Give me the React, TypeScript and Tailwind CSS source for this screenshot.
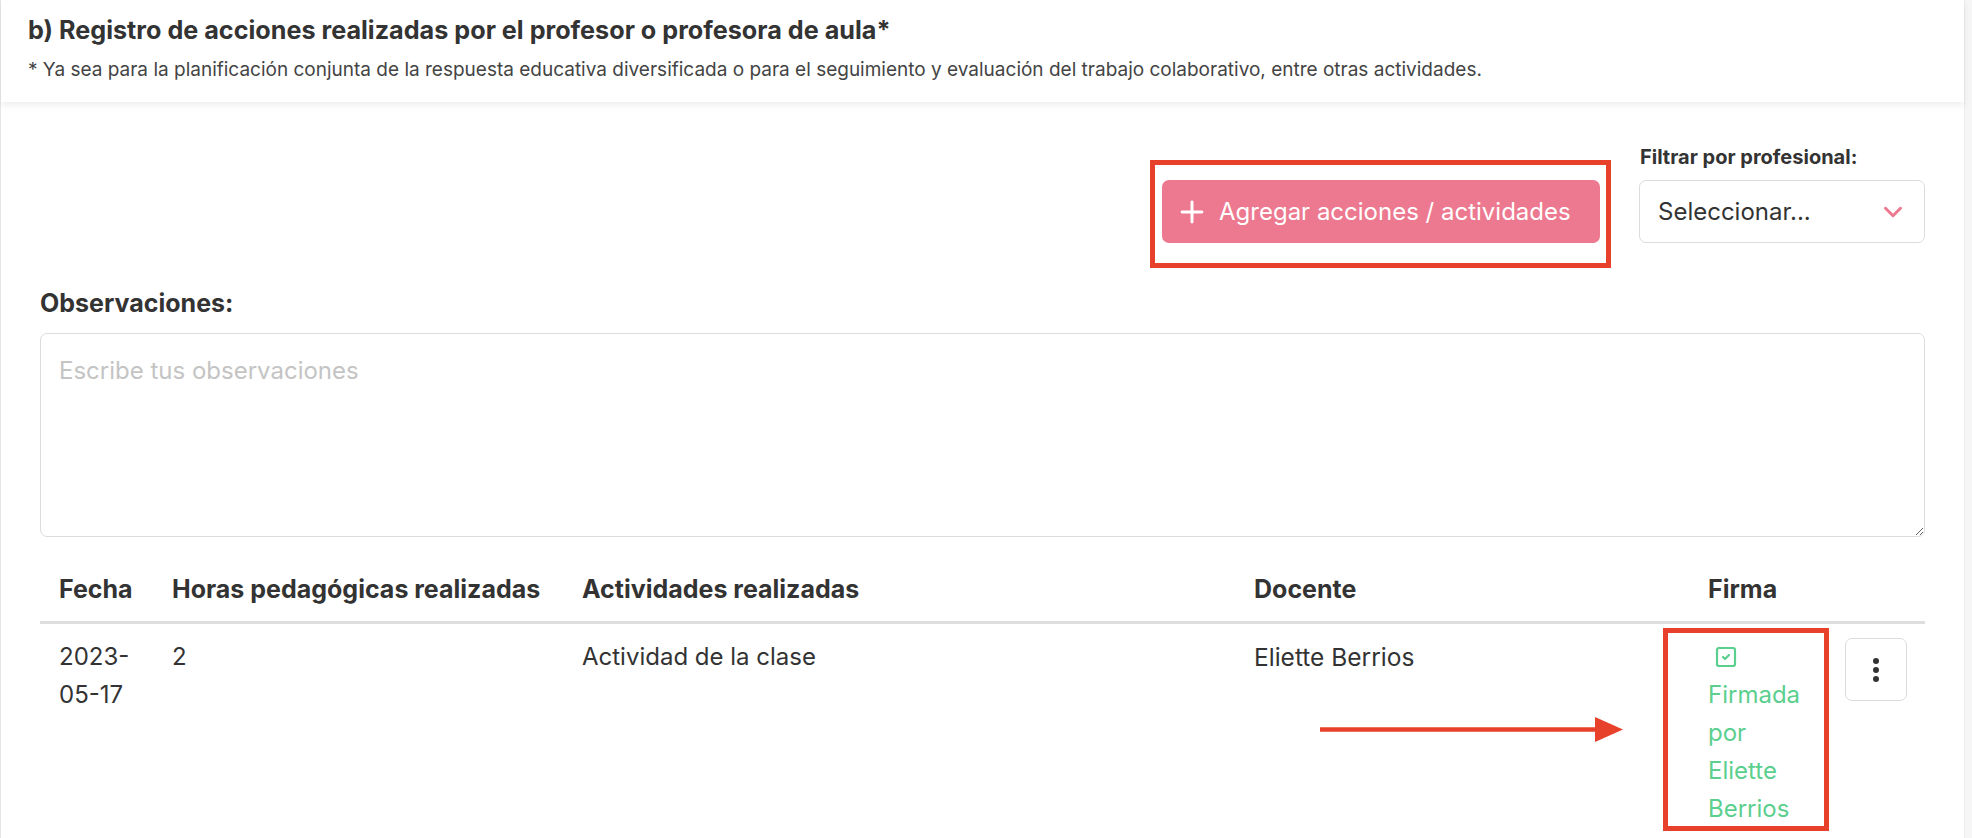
import React from "react";
import { Plus, ChevronDown, SquareCheck } from "lucide-react";

const rows = [
  {
    fecha: "2023-05-17",
    horas: "2",
    actividad: "Actividad de la clase",
    docente: "Eliette Berrios",
    firma: "Firmada por Eliette Berrios",
  },
];

const App: React.FC = () => {
  return (
    <div className="relative flex w-full h-[838px] overflow-hidden bg-white font-['Inter',sans-serif] text-[#333]">
      {/* Columna principal */}
      <div className="flex-1 flex flex-col border-l border-[#e6e6e6]">
        {/* Cabecera */}
        <div className="h-[102px] bg-white px-[27px] pt-[15px] shadow-[0_3px_7px_rgba(0,0,0,0.07)] relative z-10">
          <h2 className="text-[25.2px] leading-[30px] font-bold text-[#333]">
            b) Registro de acciones realizadas por el profesor o profesora de aula*
          </h2>
          <p className="mt-[12px] text-[19px] leading-[26px] text-[#444]">
            * Ya sea para la planificación conjunta de la respuesta educativa diversificada o para el seguimiento y
            evaluación del trabajo colaborativo, entre otras actividades.
          </p>
        </div>

        <div className="flex flex-col pl-[39px] pr-[39px] pt-[43px]">
          {/* Barra de acciones */}
          <div className="flex justify-end items-end gap-[39px]">
            <button className="w-[438px] h-[63px] rounded-[7px] bg-[#ec798f] text-white flex items-center pl-[13px] gap-[10px] text-[24px]">
              <Plus size={34} strokeWidth={2.1} />
              <span>Agregar acciones / actividades</span>
            </button>
            <div className="flex flex-col">
              <span className="text-[20px] leading-[24px] font-bold mb-[11px] pl-[1px]">Filtrar por profesional:</span>
              <div className="w-[286px] h-[63px] border border-[#dcdcdc] rounded-[7px] flex items-center justify-between pl-[18px] pr-[16px]">
                <span className="text-[24px] text-[#333]">Seleccionar...</span>
                <ChevronDown size={30} strokeWidth={2.4} className="text-[#ec798f]" />
              </div>
            </div>
          </div>

          {/* Observaciones */}
          <label className="mt-[45px] text-[25px] leading-[30px] font-bold">Observaciones:</label>
          <textarea
            className="mt-[15px] h-[204px] w-full border border-[#dcdcdc] rounded-[7px] px-[18px] pt-[18px] text-[24px] leading-[38px] placeholder:text-[#c4c4c4] outline-none"
            placeholder="Escribe tus observaciones"
          />

          {/* Tabla */}
          <table className="mt-[18px] w-full table-fixed border-collapse">
            <colgroup>
              <col className="w-[113px]" />
              <col className="w-[410px]" />
              <col className="w-[672px]" />
              <col className="w-[454px]" />
              <col className="w-[137px]" />
              <col className="w-[99px]" />
            </colgroup>
            <thead>
              <tr className="border-b-[3px] border-[#dedede]">
                <th className="px-[19px] pt-[15px] pb-[13px] text-left text-[25px] leading-[38px] font-bold whitespace-nowrap">Fecha</th>
                <th className="px-[19px] pt-[15px] pb-[13px] text-left text-[25px] leading-[38px] font-bold whitespace-nowrap">Horas pedagógicas realizadas</th>
                <th className="px-[19px] pt-[15px] pb-[13px] text-left text-[25px] leading-[38px] font-bold">Actividades realizadas</th>
                <th className="px-[19px] pt-[15px] pb-[13px] text-left text-[25px] leading-[38px] font-bold">Docente</th>
                <th className="px-[19px] pt-[15px] pb-[13px] text-left text-[25px] leading-[38px] font-bold">Firma</th>
                <th className="px-[19px] pt-[15px] pb-[13px]" />
              </tr>
            </thead>
            <tbody>
              {rows.map((r, i) => (
                <tr key={i} className="align-top">
                  <td className="px-[19px] pt-[14px] text-[24px] leading-[38px]">{r.fecha}</td>
                  <td className="px-[19px] pt-[14px] text-[24px] leading-[38px]">{r.horas}</td>
                  <td className="px-[19px] pt-[14px] text-[24px] leading-[38px]">{r.actividad}</td>
                  <td className="px-[19px] pt-[14px] text-[24.5px] leading-[38px]">{r.docente}</td>
                  <td className="px-[19px] pt-[14px] text-[24px] leading-[38px] text-[#5bcf8e]">
                    <div className="h-[38px] flex items-center pl-[6px]">
                      <SquareCheck size={24} strokeWidth={2.2} />
                    </div>
                    <div>{r.firma}</div>
                  </td>
                  <td className="px-[19px] pt-[14px]">
                    <button className="w-[62px] h-[63px] border border-[#dcdcdc] rounded-[7px] flex flex-col items-center justify-center gap-[3px]">
                      <span className="w-[6px] h-[6px] rounded-full bg-[#333]" />
                      <span className="w-[6px] h-[6px] rounded-full bg-[#333]" />
                      <span className="w-[6px] h-[6px] rounded-full bg-[#333]" />
                    </button>
                  </td>
                </tr>
              ))}
            </tbody>
          </table>
        </div>
      </div>

      {/* Franja derecha */}
      <div className="w-[8px] bg-[#f6f6f6] border-l border-[#ececec]" />

      {/* Anotaciones en rojo */}
      <div className="absolute left-[1150px] top-[160px] w-[461px] h-[108px] border-[5px] border-[#e8412b] pointer-events-none" />
      <div className="absolute left-[1663px] top-[628px] w-[166px] h-[203px] border-[5px] border-[#e8412b] pointer-events-none" />
      <svg className="absolute left-[1318px] top-[715px] pointer-events-none" width="308" height="30" viewBox="0 0 308 30">
        <line x1="2" y1="14.5" x2="280" y2="14.5" stroke="#e8412b" strokeWidth="4.5" />
        <polygon points="277,2 305,14.5 277,27" fill="#e8412b" />
      </svg>
    </div>
  );
};

export default App;
